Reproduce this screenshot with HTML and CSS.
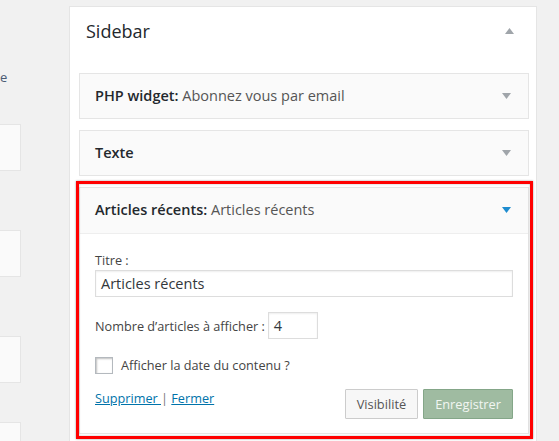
FILE: index.html
```html
<!DOCTYPE html>
<html lang="fr">
<head>
<meta charset="utf-8">
<title>Widgets</title>
<link rel="stylesheet" href="styles.css">
</head>
<body>
<div class="page">
  <aside class="left">
    <div class="frag">e</div>
    <div class="lbox b1"></div>
    <div class="lbox b2"></div>
    <div class="lbox b3"></div>
    <div class="lbox b4"></div>
  </aside>
  <section class="sidebar">
    <div class="sb-head">
      <h2>Sidebar</h2>
      <svg class="arrow" width="9" height="6" viewBox="0 0 9 6"><polygon points="4.5,0 9,6 0,6" fill="#a0a5aa"/></svg>
    </div>
    <div class="widget">
      <div class="w-top">
        <h3>PHP widget: <span class="in">Abonnez vous par email</span></h3>
        <svg class="arrow" width="9" height="6" viewBox="0 0 9 6"><polygon points="0,0 9,0 4.5,6" fill="#a0a5aa"/></svg>
      </div>
    </div>
    <div class="widget">
      <div class="w-top">
        <h3>Texte</h3>
        <svg class="arrow" width="9" height="6" viewBox="0 0 9 6"><polygon points="0,0 9,0 4.5,6" fill="#a0a5aa"/></svg>
      </div>
    </div>
    <div class="widget open">
      <div class="w-top">
        <h3>Articles récents: <span class="in">Articles récents</span></h3>
        <svg class="arrow" width="9" height="6" viewBox="0 0 9 6"><polygon points="0,0 9,0 4.5,6" fill="#1e8ccf"/></svg>
      </div>
      <div class="w-inside">
        <div class="lbl">Titre :</div>
        <div class="txt">Articles récents</div>
        <div class="num-row"><span>Nombre d’articles à afficher :</span><span class="num">4</span></div>
        <div class="chk-row"><span class="chk"></span><span>Afficher la date du contenu ?</span></div>
        <div class="actions">
          <div class="links"><a href="#">Supprimer </a> <span class="sep">|</span> <a href="#">Fermer</a></div>
          <div class="btns"><button class="btn">Visibilité</button><button class="btn save">Enregistrer</button></div>
        </div>
      </div>
      <div class="hl"></div>
    </div>
  </section>
</div>
</body>
</html>
```
FILE: styles.css
```css
body {
  margin: 0;
  background: #f1f1f1;
  font-family: "Open Sans", "DejaVu Sans", sans-serif;
  font-size: 12.7px;
  color: #444;
}
.page {
  display: flex;
  align-items: flex-start;
  height: 441px;
  overflow: hidden;
}
.left {
  width: 21px;
  flex: none;
  overflow: hidden;
}
.frag {
  margin-top: 67px;
  line-height: 20px;
  font-size: 13px;
  color: #4a5a73;
}
.lbox {
  height: 45px;
  border: 1px solid #e5e5e5;
  border-left: 0;
  background: #fafafa;
}
.b1 { margin-top: 37px; }
.b2 { margin-top: 59px; }
.b3 { margin-top: 59px; }
.b4 { margin-top: 39px; }

.sidebar {
  flex: none;
  width: 450px;
  margin-left: 48px;
  margin-top: 6px;
  padding: 0 7px 0 9px;
  height: 500px;
  border: 1px solid #e5e5e5;
  background: #fff;
}
.sb-head {
  display: flex;
  align-items: center;
  justify-content: space-between;
  padding: 12px 15px 30px 7px;
}
.sb-head h2 {
  margin: 0;
  font-size: 18px;
  font-weight: 400;
  line-height: 24px;
  color: #23282d;
}
.arrow { display: block; }

.widget {
  position: relative;
  border: 1px solid #e5e5e5;
  background: #fafafa;
  margin-bottom: 11px;
}
.w-top {
  display: flex;
  align-items: center;
  justify-content: space-between;
  padding: 12px 17px 12px 15px;
}
.w-top h3 {
  margin: 0;
  font-size: 14.5px;
  line-height: 20px;
  font-weight: 600;
  color: #23282d;
}
.w-top .in {
  font-weight: 400;
  color: #555;
}
.open .w-top {
  padding-bottom: 13px;
  border-bottom: 1px solid #eee;
}
.w-inside {
  background: #fff;
  padding: 16px 15px 14px 15px;
}
.lbl { line-height: 20px; }
.txt {
  height: 25px;
  border: 1px solid #ddd;
  box-shadow: inset 0 1px 2px rgba(0,0,0,.07);
  padding: 0 5px;
  font-size: 14.5px;
  line-height: 25px;
  color: #32373c;
}
.num-row {
  display: flex;
  align-items: center;
  gap: 3px;
  margin-top: 15px;
  line-height: 20px;
}
.num {
  width: 43px;
  height: 25px;
  border: 1px solid #ddd;
  box-shadow: inset 0 1px 2px rgba(0,0,0,.07);
  padding: 0 0 0 5px;
  font-size: 14.5px;
  line-height: 25px;
  color: #32373c;
}
.chk-row {
  display: flex;
  align-items: center;
  margin-top: 16px;
  line-height: 20px;
}
.chk {
  width: 16px;
  height: 15px;
  border: 1px solid #b4b9be;
  background: #fff;
  box-shadow: inset 1px 1px 2px rgba(0,0,0,.25);
  margin-right: 8px;
}
.actions {
  display: flex;
  justify-content: space-between;
  align-items: flex-start;
  margin-top: 14px;
}
.links {
  line-height: 20px;
  margin-top: -1px;
}
.links a {
  color: #0073aa;
  text-decoration: underline;
}
.sep { color: #777; }
.btns {
  display: flex;
  gap: 5px;
}
.btn {
  height: 30px;
  padding: 0 11px;
  font-family: "Open Sans", "DejaVu Sans", sans-serif;
  font-size: 12.8px;
  border: 1px solid #ccc;
  border-radius: 1px;
  background: #f7f7f7;
  color: #555;
}
.btn.save {
  padding: 0 11px;
  background: #9fbba1;
  border-color: #84a688;
  color: #f2f6f2;
}
.hl {
  position: absolute;
  top: -7px;
  left: -4px;
  right: -5px;
  bottom: -6px;
  border: 3px solid #ff0000;
  box-shadow: 0 0 2px rgba(0,0,0,.4), inset 0 0 2px rgba(0,0,0,.3);
  pointer-events: none;
}
```
